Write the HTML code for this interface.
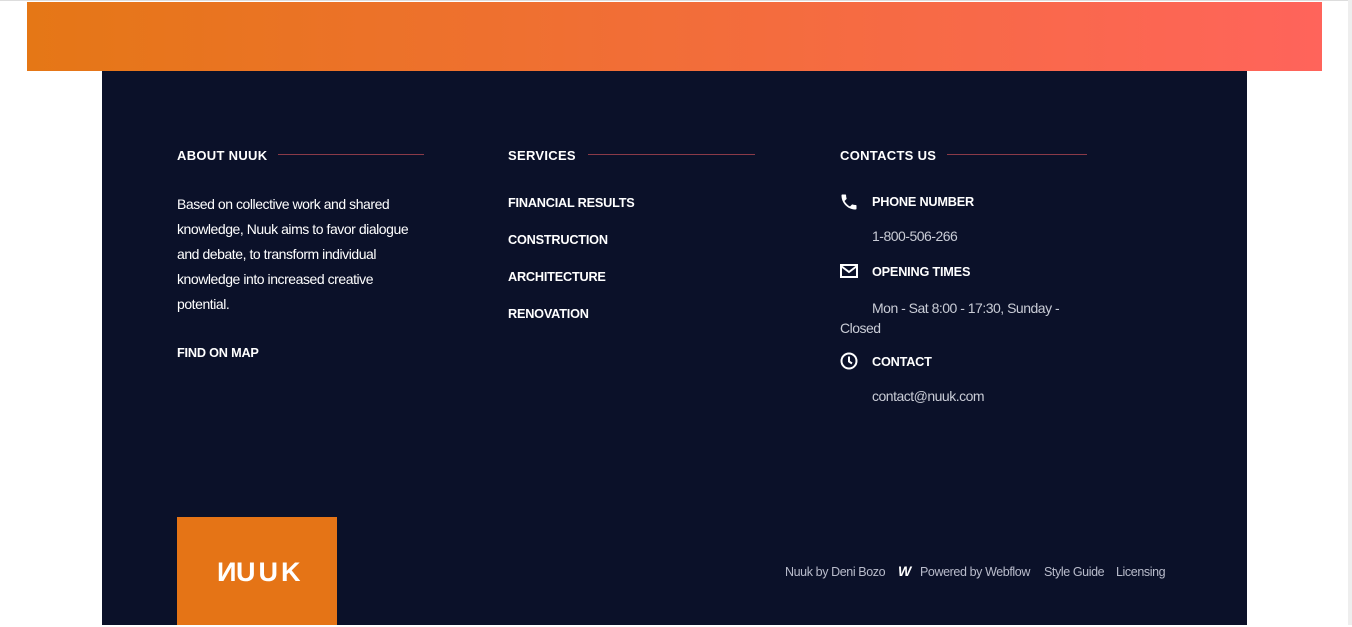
<!DOCTYPE html>
<html><head><meta charset="utf-8"><style>
*{margin:0;padding:0;box-sizing:border-box}
body{width:1352px;height:625px;background:#fff;position:relative;overflow:hidden;font-family:"Liberation Sans",sans-serif;color:#fff}
.bar{position:absolute;left:27px;top:2px;width:1295px;height:69px;background:linear-gradient(90deg,#e57716,#ff645b)}
.topline{position:absolute;left:0;top:0;width:1352px;height:1px;background:#ddd}
.sb{position:absolute;left:1348px;top:0;width:4px;height:625px;background:#eee}
.foot{position:absolute;left:102px;top:71px;width:1145px;height:554px;background:#0b1129}
.h{position:absolute;font-weight:bold;font-size:13px;letter-spacing:.3px;top:77px}
.line{position:absolute;top:83px;height:1px;background:#8a3a48}
.p{position:absolute;font-size:14px;line-height:25px;letter-spacing:-.45px}
.l{position:absolute;font-weight:bold;font-size:12.7px;letter-spacing:-.2px}
.g{position:absolute;font-size:14px;color:#c9ccd6;letter-spacing:-.5px}
.logo{position:absolute;left:75px;top:446px;width:160px;height:108px;background:#e57416;font-weight:bold;font-size:27px;letter-spacing:3px;text-align:center;line-height:110px;padding-left:3px}
.bt{position:absolute;top:494px;font-size:12.5px;color:#b9bccb;letter-spacing:-.4px}
</style></head><body>
<div class="topline"></div>
<div class="bar"></div>
<div class="foot">
<div class="h" style="left:75px">ABOUT NUUK</div><div class="line" style="left:176px;width:146px"></div>
<div class="h" style="left:406px">SERVICES</div><div class="line" style="left:486px;width:167px"></div>
<div class="h" style="left:738px">CONTACTS US</div><div class="line" style="left:845px;width:140px"></div>
<div class="p" style="left:75px;top:121px;width:250px">Based on collective work and shared knowledge, Nuuk aims to favor dialogue and debate, to transform individual knowledge into increased creative potential.</div>
<div class="l" style="left:75px;top:275px">FIND ON MAP</div>
<div class="l" style="left:406px;top:125px">FINANCIAL RESULTS</div>
<div class="l" style="left:406px;top:162px">CONSTRUCTION</div>
<div class="l" style="left:406px;top:199px">ARCHITECTURE</div>
<div class="l" style="left:406px;top:236px">RENOVATION</div>
<svg style="position:absolute;left:737px;top:121px" width="20" height="20" viewBox="0 0 24 24"><path fill="#fff" d="M6.6 10.8c1.4 2.8 3.8 5.1 6.6 6.6l2.2-2.2c.3-.3.7-.4 1-.2 1.1.4 2.300.6 3.6.6.6 0 1 .4 1 1V20c0 .6-.4 1-1 1C10.6 21 3 13.4 3 4c0-.6.4-1 1-1h3.5c.6 0 1 .4 1 1 0 1.3.2 2.5.6 3.6.1.3 0 .7-.2 1z"/></svg>
<div class="l" style="left:770px;top:124px">PHONE NUMBER</div>
<div class="g" style="left:770px;top:157px">1-800-506-266</div>
<svg style="position:absolute;left:738px;top:193px" width="18" height="14" viewBox="0 0 18 14"><rect x="1" y="1" width="16" height="12" fill="none" stroke="#fff" stroke-width="2"/><path d="M1 2l8 6 8-6" fill="none" stroke="#fff" stroke-width="2"/></svg>
<div class="l" style="left:770px;top:194px">OPENING TIMES</div>
<div class="g" style="left:738px;top:227px;width:240px;text-indent:32px;line-height:20px">Mon - Sat 8:00 - 17:30, Sunday - Closed</div>
<svg style="position:absolute;left:738px;top:281px" width="18" height="18" viewBox="0 0 18 18"><circle cx="9" cy="9" r="7.5" fill="none" stroke="#fff" stroke-width="2"/><path d="M9 4.5V9.5l3 2" fill="none" stroke="#fff" stroke-width="2"/></svg>
<div class="l" style="left:770px;top:284px">CONTACT</div>
<div class="g" style="left:770px;top:317px">contact@nuuk.com</div>
<div class="logo"><span style="display:inline-block;transform:scaleX(-1)">N</span>UUK</div>
<div class="bt" style="left:683px">Nuuk by Deni Bozo</div>
<div class="bt" style="left:796px;font-weight:bold;font-style:italic;color:#fff;font-size:14px;top:492px">W</div>
<div class="bt" style="left:818px">Powered by Webflow</div>
<div class="bt" style="left:942px">Style Guide</div>
<div class="bt" style="left:1014px">Licensing</div>
</div>
<div class="sb"></div>
</body></html>
